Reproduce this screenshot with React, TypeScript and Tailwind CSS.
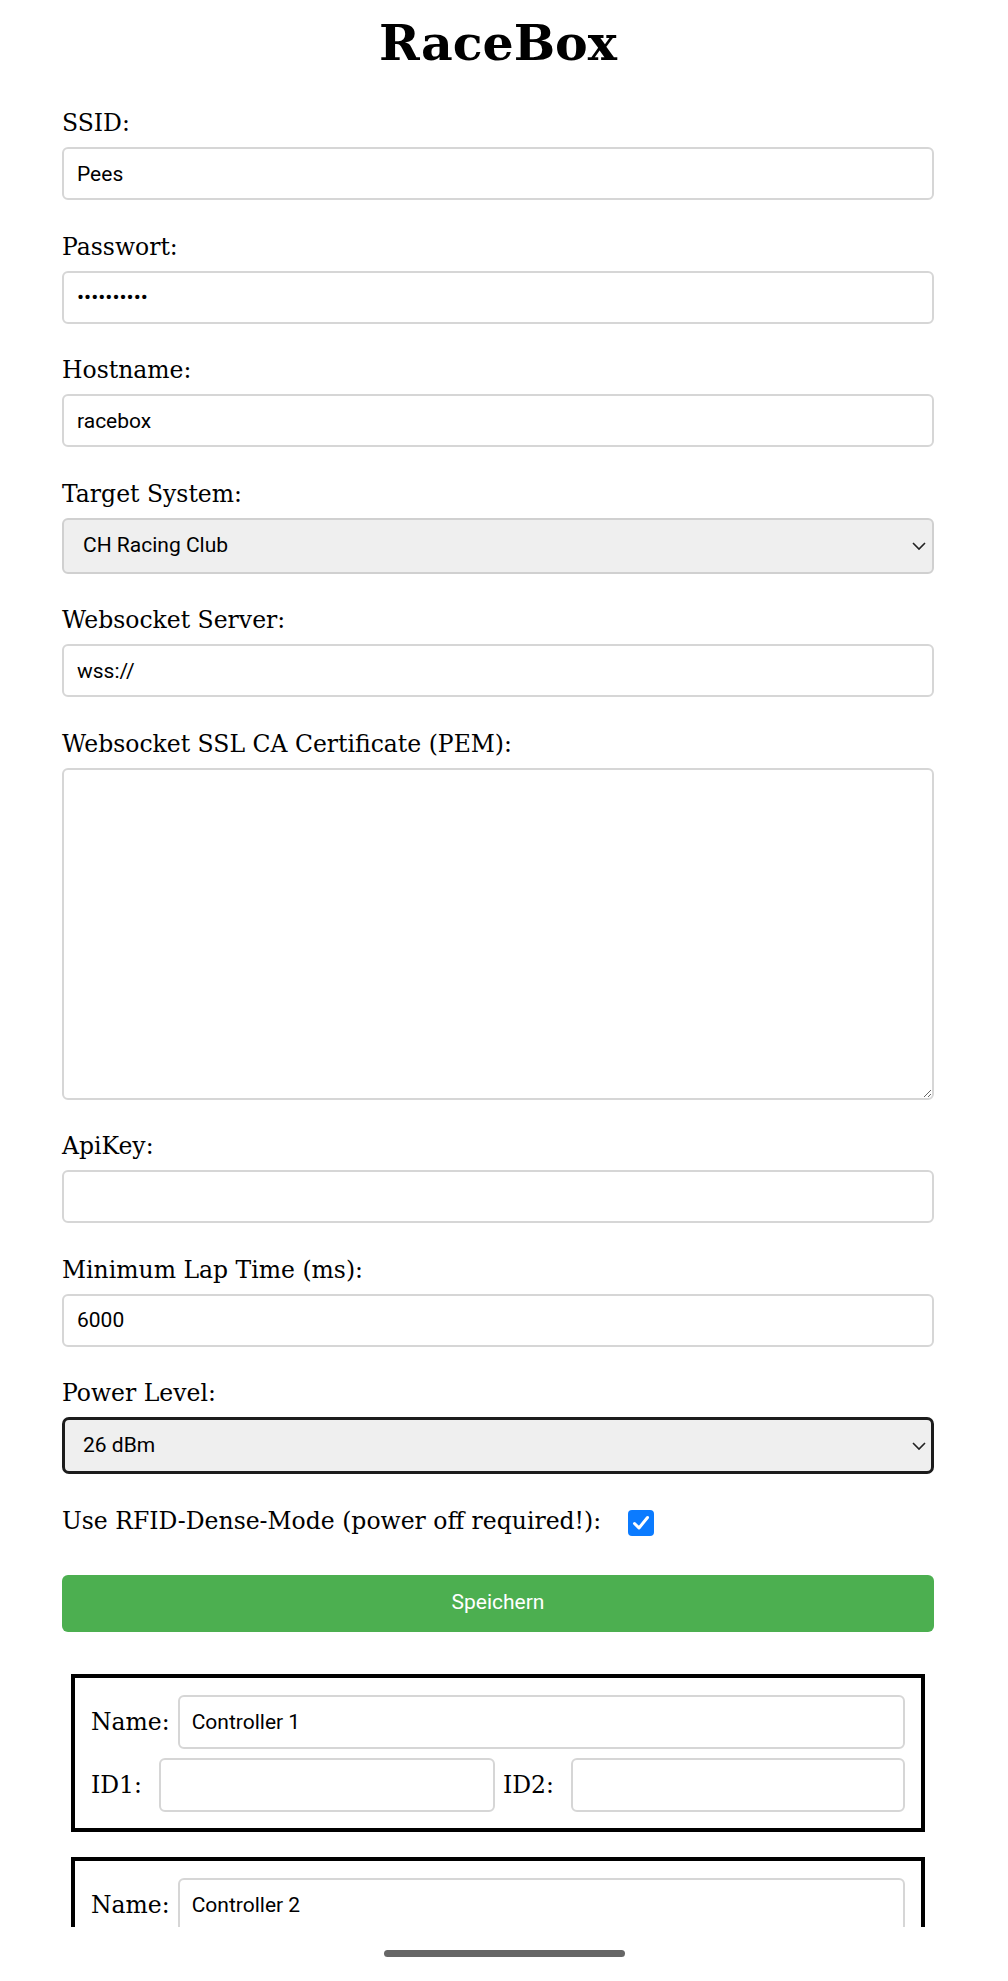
import React from 'react';

const serif = "font-['DejaVu_Serif',serif]";
const sans = "font-['Roboto',sans-serif]";

const inputCls =
  'block w-full h-[53px] rounded-[6px] border-2 border-[#d6d6d6] bg-white pl-[13px] text-[21px] text-black outline-none ' + sans;

const Chevron: React.FC = () => (
  <svg
    className="pointer-events-none absolute right-[8px] top-1/2 -translate-y-1/2"
    width="14"
    height="9"
    viewBox="0 0 14 9"
    fill="none"
  >
    <path d="M1 1.5 L7 7.5 L13 1.5" stroke="#222" strokeWidth="1.6" />
  </svg>
);

const Field: React.FC<{ label: string; children: React.ReactNode }> = ({ label, children }) => (
  <div className="mb-[31.5px]">
    <label className={`block text-[23.5px] leading-[30px] mb-[9px] text-black ${serif}`}>{label}</label>
    {children}
  </div>
);

const Controller: React.FC<{ name: string }> = ({ name }) => (
  <div className="mx-[9px] mb-[25px] border-[4px] border-black px-[16px] pt-[17px] pb-[16px]">
    <div className="flex items-center">
      <span className={`text-[23.5px] leading-[30px] text-black ${serif}`}>Name:</span>
      <input
        readOnly
        defaultValue={name}
        className={`ml-[8px] flex-1 h-[54px] rounded-[6px] border-2 border-[#d6d6d6] pl-[12px] text-[21px] text-black outline-none ${sans}`}
      />
    </div>
    <div className="mt-[9px] flex items-center">
      <span className={`text-[23.5px] leading-[30px] text-black ${serif}`}>ID1:</span>
      <input
        readOnly
        className="ml-[17px] w-[336px] h-[54px] rounded-[6px] border-2 border-[#d6d6d6] outline-none"
      />
      <span className={`ml-[8px] text-[23.5px] leading-[30px] text-black ${serif}`}>ID2:</span>
      <input
        readOnly
        className="ml-[17px] flex-1 h-[54px] rounded-[6px] border-2 border-[#d6d6d6] outline-none"
      />
    </div>
  </div>
);

const App: React.FC = () => {
  return (
    <div className="w-[1008px] h-[1981px] bg-white flex flex-col">
      <div className="h-[1927px] overflow-hidden pl-[62px] pr-[74px]">
        <h1 className={`mt-[13px] mb-[35px] text-center text-[49px] leading-[60px] font-bold text-black ${serif}`}>
          RaceBox
        </h1>

        <Field label="SSID:">
          <input readOnly defaultValue="Pees" className={inputCls} />
        </Field>

        <Field label="Passwort:">
          <input readOnly type="password" defaultValue="abcdefghij" className={inputCls} />
        </Field>

        <Field label="Hostname:">
          <input readOnly defaultValue="racebox" className={inputCls} />
        </Field>

        <Field label="Target System:">
          <div className="relative">
            <select
              defaultValue="ch"
              className={`block w-full h-[56px] appearance-none rounded-[6px] border-2 border-[#d0d0d0] bg-[#efefef] pl-[19px] text-[21px] text-black outline-none ${sans}`}
            >
              <option value="ch">CH Racing Club</option>
            </select>
            <Chevron />
          </div>
        </Field>

        <Field label="Websocket Server:">
          <input readOnly defaultValue="wss://" className={inputCls} />
        </Field>

        <Field label="Websocket SSL CA Certificate (PEM):">
          <textarea
            readOnly
            className="block w-full h-[332px] rounded-[6px] border-2 border-[#d6d6d6] bg-white outline-none"
          />
        </Field>

        <Field label="ApiKey:">
          <input readOnly className={inputCls} />
        </Field>

        <Field label="Minimum Lap Time (ms):">
          <input readOnly defaultValue="6000" className={inputCls} />
        </Field>

        <Field label="Power Level:">
          <div className="relative">
            <select
              defaultValue="26"
              className={`block w-full h-[57px] appearance-none rounded-[7px] border-[3px] border-[#1c1c1c] bg-[#efefef] pl-[18px] text-[21px] text-black outline-none ${sans}`}
            >
              <option value="26">26 dBm</option>
            </select>
            <Chevron />
          </div>
        </Field>

        <div className="mb-[39px] flex h-[30px] items-center">
          <span className={`text-[23.5px] leading-[30px] text-black ${serif}`}>
            Use RFID-Dense-Mode (power off required!):
          </span>
          <span className="ml-[27px] mt-[4px] flex h-[26px] w-[26px] items-center justify-center rounded-[4px] bg-[#0b7bff]">
            <svg width="18" height="16" viewBox="0 0 18 16" fill="none">
              <path d="M2.5 8.5 L7 13 L15.5 2.5" stroke="#fff" strokeWidth="3" strokeLinecap="round" strokeLinejoin="round" />
            </svg>
          </span>
        </div>

        <button
          className={`mb-[42px] block w-full h-[57px] rounded-[6px] bg-[#4caf50] text-[21px] text-white ${sans}`}
        >
          Speichern
        </button>

        <Controller name="Controller 1" />
        <Controller name="Controller 2" />
      </div>

      <div className="flex flex-1 items-start justify-center pt-[23px]">
        <div className="h-[7px] w-[241px] rounded-full bg-[#666]" />
      </div>
    </div>
  );
};

export default App;
